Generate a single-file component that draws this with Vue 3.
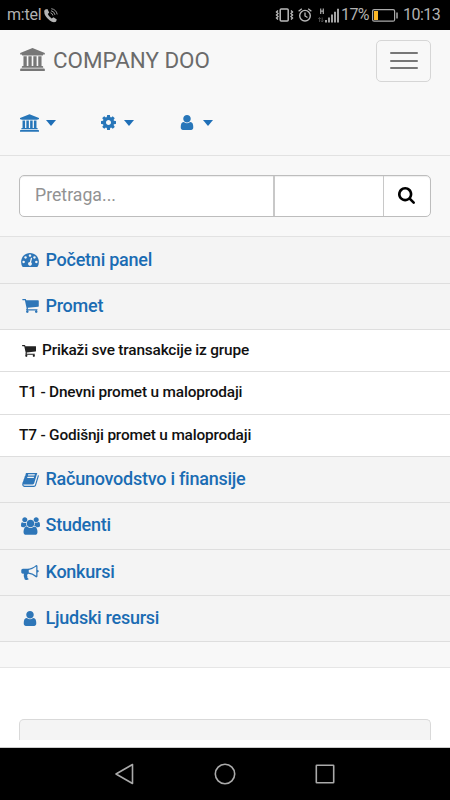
<script setup>
import { h } from 'vue'

const icons = {
  bank: ['0 0 1920 1792', 'M960 0l960 384v128h-128q0 26-20.5 45t-48.5 19h-1526q-28 0-48.5-19t-20.5-45h-128v-128zm-704 640h256v768h128v-768h256v768h128v-768h256v768h128v-768h256v768h59q28 0 48.5 19t20.5 45v64h-1664v-64q0-26 20.5-45t48.5-19h59v-768zm1595 960q28 0 48.5 19t20.5 45v128h-1920v-128q0-26 20.5-45t48.5-19h1782z'],
  cog: ['128 128 1536 1536', 'M1152 896q0-106-75-181t-181-75-181 75-75 181 75 181 181 75 181-75 75-181zm512-109v222q0 12-8 23t-20 13l-185 28q-19 54-39 91 35 50 107 138 10 12 10 25t-9 23q-27 37-99 108t-94 71q-12 0-26-9l-138-108q-44 23-91 38-16 136-29 186-7 28-36 28h-222q-14 0-24.5-8.5t-11.5-21.5l-28-184q-49-16-90-37l-141 107q-10 9-25 9-14 0-25-11-126-114-165-168-7-10-7-23 0-12 8-23 15-21 51-66.5t54-70.5q-27-50-41-99l-183-27q-13-2-21-12.5t-8-23.5v-222q0-12 8-23t19-13l186-28q14-46 39-92-40-57-107-138-10-12-10-24 0-10 9-23 26-36 98.5-107.5t94.5-71.5q13 0 26 10l138 107q44-23 91-38 16-136 29-186 7-28 36-28h222q14 0 24.5 8.5t11.5 21.5l28 184q49 16 90 37l142-107q9-9 24-9 13 0 25 10 129 119 165 170 7 8 7 22 0 12-8 23-15 21-51 66.5t-54 70.5q26 50 41 98l183 28q13 2 21 12.5t8 23.5z'],
  user: ['256 128 1280 1536', 'M1536 1399q0 109-62.5 187t-150.5 78h-854q-88 0-150.5-78t-62.5-187q0-85 8.5-160.5t31.5-152 58.5-131 94-89 134.5-34.5q131 128 313 128t313-128q76 0 134.5 34.5t94 89 58.5 131 31.5 152 8.5 160.5zm-256-887q0 159-112.5 271.5t-271.5 112.5-271.5-112.5-112.5-271.5 112.5-271.5 271.5-112.5 271.5 112.5 112.5 271.5z'],
  search: ['64 128 1664 1664', 'M1216 832q0-185-131.5-316.5t-316.5-131.5-316.5 131.5-131.5 316.5 131.5 316.5 316.5 131.5 316.5-131.5 131.5-316.5zm512 832q0 52-38 90t-90 38q-54 0-90-38l-343-342q-179 124-399 124-143 0-273.5-55.5t-225-150-150-225-55.5-273.5 55.5-273.5 150-225 225-150 273.5-55.5 273.5 55.5 225 150 150 225 55.5 273.5q0 220-124 399l343 343q37 37 37 90z'],
  cart: ['64 256 1664 1408', 'M704 1536q0 52-38 90t-90 38-90-38-38-90 38-90 90-38 90 38 38 90zm896 0q0 52-38 90t-90 38-90-38-38-90 38-90 90-38 90 38 38 90zm128-1088v512q0 24-16.5 42.5t-40.5 21.5l-1044 122q13 60 13 70 0 16-24 64h920q26 0 45 19t19 45-19 45-45 19h-1024q-26 0-45-19t-19-45q0-11 8-31.5t16-36 21.5-40 15.5-29.5l-177-823h-204q-26 0-45-19t-19-45 19-45 45-19h256q16 0 28.5 6.5t19.5 15.5 13 24.5 8 26 5.5 29.5 4.5 26h1201q26 0 45 19t19 45z'],
  gauge: ['0 256 1792 1408', 'M384 1152q0-53-37.5-90.5t-90.5-37.5-90.5 37.5-37.5 90.5 37.5 90.5 90.5 37.5 90.5-37.5 37.5-90.5zm192-448q0-53-37.5-90.5t-90.5-37.5-90.5 37.5-37.5 90.5 37.5 90.5 90.5 37.5 90.5-37.5 37.5-90.5zm428 481l101-382q6-26-7.5-48.5t-38.5-29.5-48 6.5-30 39.5l-101 382q-60 5-107 43.5t-63 98.5q-20 77 20 146t117 89 146-20 89-117q16-60-6-117t-72-91zm660-33q0-53-37.5-90.5t-90.5-37.5-90.5 37.5-37.5 90.5 37.5 90.5 90.5 37.5 90.5-37.5 37.5-90.5zm-640-640q0-53-37.5-90.5t-90.5-37.5-90.5 37.5-37.5 90.5 37.5 90.5 90.5 37.5 90.5-37.5 37.5-90.5zm448 192q0-53-37.5-90.5t-90.5-37.5-90.5 37.5-37.5 90.5 37.5 90.5 90.5 37.5 90.5-37.5 37.5-90.5zm320 448q0 261-141 483-19 29-54 29h-1402q-35 0-54-29-141-221-141-483 0-182 71-348t191-286 286-191 348-71 348 71 286 191 191 286 71 348z'],
  book: ['0 256 1664 1408', 'M1639 478q40 57 18 129l-275 906q-19 64-76.5 107.5t-122.5 43.5h-923q-77 0-148.5-53.5t-99.5-131.5q-24-67-2-127 0-4 3-27t4-37q1-8-3-21.5t-3-19.5q2-11 8-21t16.5-23.5 16.5-23.5q23-38 45-91.5t30-91.5q3-10 .5-30t-.5-28q3-11 17-28t17-23q21-36 42-92t25-90q1-9-2.5-32t.5-28q4-13 22-30.5t22-22.5q19-26 42.5-84.5t27.5-96.5q1-8-3-25.5t-2-26.5q2-8 9-18t18-23 17-21q8-12 16.5-30.5t15-35 16-36 19.5-32 26.5-23.5 36-11.5 47.5 5.5l-1 3q38-9 51-9h761q74 0 114 56t18 130l-274 906q-36 119-71.5 153.5t-128.5 34.5h-869q-27 0-38 15-11 16-1 43 24 70 144 70h923q29 0 56-15.5t35-41.5l300-987q7-22 5-57 38 15 59 43zm-1064 2q-4 13 2 22.5t20 9.5h608q13 0 25.5-9.5t16.5-22.5l21-64q4-13-2-22.5t-20-9.5h-608q-13 0-25.5 9.5t-16.5 22.5zm-83 256q-4 13 2 22.5t20 9.5h608q13 0 25.5-9.5t16.5-22.5l21-64q4-13-2-22.5t-20-9.5h-608q-13 0-25.5 9.5t-16.5 22.5z'],
  users: ['64 0 1920 1792', 'M657 896q-162 5-265 128h-134q-82 0-138-40.5t-56-118.5q0-353 124-353 6 0 43.5 21t97.5 42.5 119 21.5q67 0 133-23-5 37-5 66 0 159 81 286zm1071 637q0 120-73 189.5t-194 69.5h-874q-121 0-194-69.5t-73-189.5q0-53 3.5-103.5t14-109 26.5-108.5 43-97.5 62-81 85.5-53.5 111.5-20q10 0 43 21.5t73 48 107 48 135 21.5 135-21.5 107-48 73-48 43-21.5q61 0 111.5 20t85.5 53.5 62 81 43 97.5 26.5 108.5 14 109 3.5 103.5zm-1024-1277q0 106-75 181t-181 75-181-75-75-181 75-181 181-75 181 75 75 181zm704 384q0 159-112.5 271.5t-271.5 112.5-271.5-112.5-112.5-271.5 112.5-271.5 271.5-112.5 271.5 112.5 112.5 271.5zm576 225q0 78-56 118.5t-138 40.5h-134q-103-123-265-128 81-127 81-286 0-29-5-66 66 23 133 23 59 0 119-21.5t97.5-42.5 43.5-21q124 0 124 353zm-128-609q0 106-75 181t-181 75-181-75-75-181 75-181 181-75 181 75 75 181z'],
  horn: ['0 128 1792 1540', 'M1664 640q53 0 90.5 37.5t37.5 90.5-37.5 90.5-90.5 37.5v384q0 52-38 90t-90 38q-417-347-812-380-58 19-91 66t-31 100.5 40 92.5q-20 33-23 65.5t6 58 33.5 55 48 50 61.5 50.5q-29 58-111.5 83t-168.5 11.5-132-55.5q-7-23-29.5-87.5t-32-94.5-23-89-15-101 3.5-98.5 22-110.5h-122q-66 0-113-47t-47-113v-192q0-66 47-113t113-47h480q435 0 896-384 52 0 90 38t38 90v384zm-128 604v-954q-394 302-768 343v270q377 42 768 341z'],
}

const Icon = (props) =>
  h('svg', { viewBox: icons[props.name][0], fill: 'currentColor', 'aria-hidden': 'true' }, [
    h('path', { d: icons[props.name][1] }),
  ])
Icon.props = ['name']

const shortcuts = ['bank', 'cog', 'user']
const rows = [
  { label: 'Početni panel', icon: 'gauge' },
  { label: 'Promet', icon: 'cart' },
  { label: 'Prikaži sve transakcije iz grupe', icon: 'cart', sub: true },
  { label: 'T1 - Dnevni promet u maloprodaji', sub: true },
  { label: 'T7 - Godišnji promet u maloprodaji', sub: true },
  { label: 'Računovodstvo i finansije', icon: 'book' },
  { label: 'Studenti', icon: 'users' },
  { label: 'Konkursi', icon: 'horn' },
  { label: 'Ljudski resursi', icon: 'user' },
]
</script>

<template>
  <div class="screen">
    <div class="status">
      <span class="carrier">m:tel</span>
      <svg class="call" viewBox="0 0 14 15" fill="none">
        <path d="M1.2 1.6L3.4.9 5.2 4.6 3.8 6q1 2.7 3.9 4.5l1.8-1.2 3.3 2.3-.8 2.2q-3.2 1.1-6.2-1.3Q.1 8.200.2 3.300.3 2.100 1.200 1.600z" fill="#b4b4b4" />
        <path d="M6.500 4.800q2 .5 2.400 2.700M7 2.700q3.400.7 4 4.200M7.300.7q5 .8 5.900 5.700" stroke="#999" stroke-width="1" />
      </svg>
      <span class="spacer"></span>
      <svg class="vibrate" viewBox="0 0 19 14" fill="none" stroke="#bababa">
        <rect x="5.200" y="1" width="8" height="12" rx="1" stroke-width="1.500" />
        <path d="M3 2.500L1.500 4 3 5.500 1.500 7 3 8.500 1.500 10 3 11.500M16 2.500L17.500 4 16 5.500 17.500 7 16 8.500 17.500 10 16 11.500" stroke-width="1.400" />
      </svg>
      <svg class="alarm" viewBox="0 0 14 14" fill="none" stroke="#b8b8b8">
        <circle cx="7" cy="7.700" r="5.300" stroke-width="1.400" />
        <path d="M7 4.500v3.500l2.500 1.500M.6 3.300L3.800.8M13.400 3.300L10.200.8" stroke-width="1.300" />
      </svg>
      <svg class="signal" viewBox="0 0 23 15" fill="none">
        <path d="M3.700.5v5.500M6.300.5v5.500M3.700 3.200h2.600" stroke="#aaa" stroke-width="1.200" />
        <path d="M2.500 9.500v4.500M1.200 11l1.300-1.500L3.800 11M5.200 9.500V14M3.900 12.500L5.200 14l1.300-1.500" stroke="#555" stroke-width=".8" />
        <path d="M9 12v2.500M12 9.500v5M15 6.500v8M18 3.700v10.800M21 .7v13.800" stroke="#aaa" stroke-width="1.900" />
      </svg>
      <span class="percent">17%</span>
      <svg class="battery" viewBox="0 0 26 13" fill="none">
        <rect x=".6" y=".6" width="22" height="11.600" rx="1.500" stroke="#aaa" stroke-width="1.200" />
        <path d="M2 2h4v9H2z" fill="#fdb827" />
        <path d="M25 3.500v6" stroke="#aaa" stroke-width="1.500" />
      </svg>
      <span class="clock">10:13</span>
    </div>

    <header class="navbar">
      <div class="brandbar">
        <Icon name="bank" class="brand-icon" />
        <span class="brand">COMPANY DOO</span>
        <button class="toggle" aria-label="Meni"><i></i><i></i><i></i></button>
      </div>
      <div class="shortcuts">
        <a v-for="name in shortcuts" :key="name" class="shortcut">
          <Icon :name="name" :class="['short-icon', name]" /><b class="caret"></b>
        </a>
      </div>
    </header>

    <div class="search">
      <div class="group">
        <div class="field query">Pretraga...</div>
        <div class="field scope"></div>
        <div class="go"><Icon name="search" class="search-icon" /></div>
      </div>
    </div>

    <nav class="menu">
      <a v-for="row in rows" :key="row.label" :class="['row', { sub: row.sub }]">
        <span v-if="row.icon" class="slot"><Icon :name="row.icon" :class="['row-icon', row.icon]" /></span>
        <span class="label">{{ row.label }}</span>
      </a>
    </nav>
    <div class="menu-end"></div>

    <main class="content"><div class="panel"></div></main>

    <footer class="keys">
      <svg viewBox="0 0 22 24"><path d="M18.500 2.500v19L2 12z" /></svg>
      <svg viewBox="0 0 22 24"><circle cx="11" cy="12" r="9.700" /></svg>
      <svg viewBox="0 0 22 24"><rect x="2.300" y="3.300" width="17.400" height="17.400" rx=".5" /></svg>
    </footer>
  </div>
</template>

<style>
body { margin: 0; background: #fff; }
</style>

<style scoped>
.screen { width: 450px; height: 800px; display: flex; flex-direction: column; overflow: hidden; background: #fff; font-family: Roboto, sans-serif; box-sizing: border-box; }
.screen *, .screen *::before { box-sizing: border-box; }
svg { display: block; flex: none; }
.status { height: 30px; flex: none; background: #000; color: #b2b2b2; display: flex; align-items: center; padding: 0 10px 0 7px; font-size: 16px; line-height: 30px; white-space: nowrap; }
.carrier { width: 37px; font-size: 16px; letter-spacing: -.25px; }
.call { width: 14px; height: 15px; }
.spacer { flex: 1; }
.vibrate { width: 19px; height: 14px; margin-right: 4px; }
.alarm { width: 14px; height: 14px; margin-right: 5px; }
.signal { width: 23px; height: 15px; margin-right: 1px; }
.percent { width: 31px; font-size: 16px; letter-spacing: -.6px; }
.battery { width: 26px; height: 13px; margin-right: 5px; }
.clock { width: 37px; font-size: 16px; letter-spacing: -.5px; }
.navbar { height: 126px; flex: none; background: #f8f8f8; border-bottom: 1px solid #e2e2e2; }
.brandbar { height: 61px; display: flex; align-items: center; padding: 0 19px 0 20px; }
.brand-icon { width: 25px; height: 23px; margin-bottom: 2px; color: #777; }
.brand { flex: 1; margin: 0 0 1px 8px; color: #6b6b6b; font-size: 22.400px; line-height: 30px; }
.toggle { width: 55px; height: 42px; padding: 0; border: 1px solid #d6d6d6; border-radius: 5px; background: transparent; display: flex; flex-direction: column; align-items: center; justify-content: center; gap: 5.500px; }
.toggle i { width: 28px; height: 2px; border-radius: 1px; background: #777; }
.shortcuts { height: 63px; display: flex; padding-left: 20px; color: #2776b9; }
.shortcut { width: 79.500px; display: flex; align-items: center; }
.short-icon.bank { width: 19px; height: 18px; }
.short-icon.cog { width: 15px; height: 15px; margin: 0 1px 0 1.500px; }
.short-icon.user { width: 14px; height: 15px; margin: 0 2px 0 1px; }
.caret { margin-left: 7px; border: 5px solid transparent; border-top: 6px solid #1f6fb7; border-bottom: 0; }
.search { height: 81.400px; flex: none; background: #f8f8f8; border-bottom: 1px solid #e2e2e2; padding: 19px 19px 0; }
.group { height: 42px; display: flex; border: 1px solid #bdbdbd; border-radius: 5px; background: #fff; overflow: hidden; box-shadow: inset 0 1px 1px #eee; }
.field { font-size: 17.700px; line-height: 39px; color: #929292; }
.query { width: 255px; padding-left: 15px; border-right: 2px solid #c8c8c8; }
.scope { width: 109px; border-right: 1px solid #c8c8c8; }
.go { flex: 1; display: flex; align-items: center; justify-content: center; padding: 0 1px 1px 0; color: #000; }
.search-icon { width: 17px; height: 17px; }
.menu { flex: none; }
.row { height: 46.250px; display: flex; align-items: center; padding-left: 19px; background: #f4f4f4; border-bottom: 1px solid #dedede; color: #1a6cb3; font-weight: 500; font-size: 18px; letter-spacing: -.25px; }
.slot { width: 22px; margin-right: 4.500px; display: flex; justify-content: center; }
.row-icon { color: #2e76b8; }
.row-icon.gauge { width: 18px; height: 14px; }
.row-icon.cart { width: 17px; height: 14px; }
.row-icon.book { width: 17px; height: 14px; }
.row-icon.users { width: 19px; height: 18px; }
.row-icon.horn { width: 18px; height: 15px; }
.row-icon.user { width: 14px; height: 15px; }
.label { white-space: nowrap; line-height: 20px; margin-bottom: 1px; }
.sub { height: 42.400px; background: #fff; color: #111; font-size: 15.400px; letter-spacing: -.18px; }
.sub .slot { width: 19px; margin-right: 4px; }
.sub .row-icon { width: 14px; height: 12px; color: #222; }
.menu-end { height: 26px; flex: none; background: #f8f8f8; border-bottom: 1px solid #e6e6e6; }
.content { flex: 1; padding: 51px 19px 7px; border-bottom: 1px solid #ccc; }
.panel { height: 100%; background: #f4f4f4; border: 1px solid #d9d9d9; border-bottom: 0; border-radius: 5px 5px 0 0; }
.keys { height: 52px; flex: none; background: #000; display: flex; justify-content: center; align-items: center; gap: 78px; }
.keys svg { width: 22px; height: 24px; fill: none; stroke: #aaa; stroke-width: 1.600; stroke-linejoin: round; }
</style>
